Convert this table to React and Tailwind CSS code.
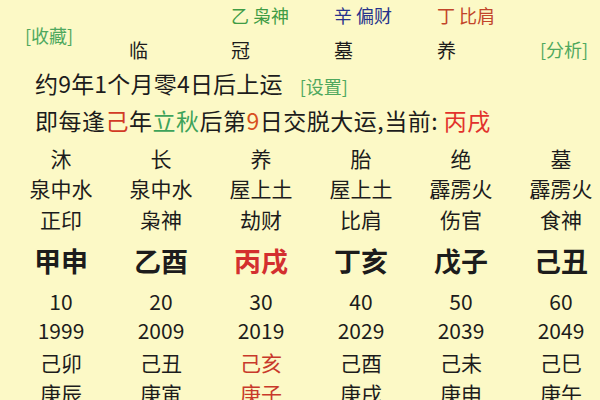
import React from 'react';

// 大运排盘 - 列数据
const columns = [
  { state: '沐', nayin: '泉中水', god: '正印', gz: '甲申', age: '10', year: '1999', a: '己卯', b: '庚辰' },
  { state: '长', nayin: '泉中水', god: '枭神', gz: '乙酉', age: '20', year: '2009', a: '己丑', b: '庚寅' },
  { state: '养', nayin: '屋上土', god: '劫财', gz: '丙戌', age: '30', year: '2019', a: '己亥', b: '庚子', current: true },
  { state: '胎', nayin: '屋上土', god: '比肩', gz: '丁亥', age: '40', year: '2029', a: '己酉', b: '庚戌' },
  { state: '绝', nayin: '霹雳火', god: '伤官', gz: '戊子', age: '50', year: '2039', a: '己未', b: '庚申' },
  { state: '墓', nayin: '霹雳火', god: '食神', gz: '己丑', age: '60', year: '2049', a: '己巳', b: '庚午' },
];

const font = { fontFamily: '"Noto Sans CJK SC", "Noto Sans", sans-serif' };

function Row({ h, cls, render }) {
  return (
    <div className={`grid grid-cols-[repeat(6,100px)] pl-[11px] ${h}`}>
      {columns.map((c, i) => (
        <div key={i} className={`flex items-center justify-center whitespace-nowrap ${cls}`}>
          {render(c)}
        </div>
      ))}
    </div>
  );
}

export default function App() {
  return (
    <div className="w-[600px] h-[400px] overflow-hidden bg-[#fcf9c6] text-[#1c1c1c]" style={font}>
      {/* 상단 헤더 */}
      <div className="flex h-[64px]">
        <div className="w-[128px] pl-[25px] pt-[24px]">
          <span className="text-[18px] leading-[20px] text-[#4fa85e]">[收藏]</span>
        </div>
        <div className="w-[412px] grid grid-cols-4 grid-rows-[25px_39px] text-[18px] leading-[20px]">
          <div />
          <div className="pt-[5px] text-[#3f9c45]">乙 枭神</div>
          <div className="pt-[5px] text-[#27338c]">辛 偏财</div>
          <div className="pt-[5px] text-[#c2452a]">丁 比肩</div>
          <div className="pt-[14px] pl-[1px] text-[19px] leading-[22px]">临</div>
          <div className="pt-[14px] text-[19px] leading-[22px]">冠</div>
          <div className="pt-[14px] text-[19px] leading-[22px]">墓</div>
          <div className="pt-[14px] text-[19px] leading-[22px]">养</div>
        </div>
        <div className="pt-[38px]">
          <span className="text-[18px] leading-[20px] text-[#4fa85e]">[分析]</span>
        </div>
      </div>

      {/* 起运 정보 */}
      <div className="mt-[5px] h-[28px] pl-[35px] flex items-center text-[23px] leading-[28px] whitespace-nowrap">
        <span className="tracking-[0.2px]">约9年1个月零4日后上运</span>
        <span className="ml-[17px] mt-[5px] text-[18px] leading-[20px] text-[#4fa85e]">[设置]</span>
      </div>
      <div className="mt-[9px] h-[28px] pl-[35px] flex items-center text-[23px] leading-[28px] whitespace-nowrap tracking-[0.5px]">
        <span>
          即每逢<span className="text-[#d23b25]">己</span>年<span className="text-[#3ea35a]">立秋</span>后第
          <span className="text-[#d8501e]">9</span>日交脱大运,当前: <span className="text-[#e2322c]">丙戌</span>
        </span>
      </div>

      {/* 大运 표 */}
      <div className="mt-[9px]">
        <Row h="h-[30px]" cls="text-[21px] leading-[28px]" render={(c) => c.state} />
        <Row h="h-[30px]" cls="text-[21px] leading-[28px]" render={(c) => c.nayin} />
        <Row h="h-[32px]" cls="text-[21px] leading-[28px]" render={(c) => c.god} />
        <Row
          h="h-[52px]"
          cls="text-[27px] leading-[34px] font-bold"
          render={(c) => <span className={c.current ? 'text-[#d32f2f]' : ''}>{c.gz}</span>}
        />
        <Row h="h-[28px]" cls="text-[21px] leading-[28px]" render={(c) => c.age} />
        <Row h="h-[30px]" cls="text-[21px] leading-[28px]" render={(c) => c.year} />
        <Row
          h="h-[34px]"
          cls="text-[21px] leading-[28px]"
          render={(c) => <span className={c.current ? 'text-[#c8392b]' : ''}>{c.a}</span>}
        />
        <Row
          h="h-[28px]"
          cls="text-[21px] leading-[28px]"
          render={(c) => <span className={c.current ? 'text-[#c8392b]' : ''}>{c.b}</span>}
        />
      </div>
    </div>
  );
}
